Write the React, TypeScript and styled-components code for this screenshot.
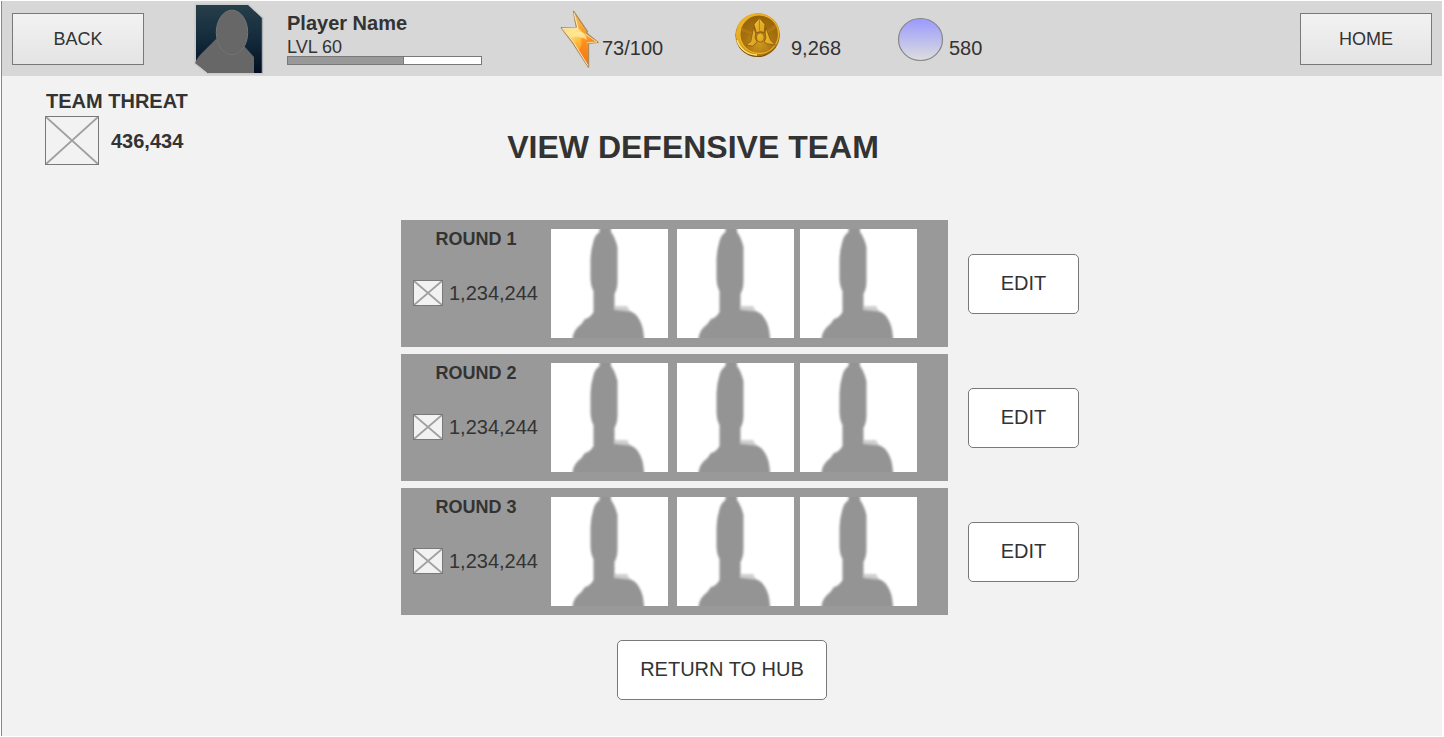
import React from 'react';
import styled, { createGlobalStyle } from 'styled-components';

const GlobalStyle = createGlobalStyle`
  * {
    box-sizing: border-box;
  }
  body {
    margin: 0;
    background: #ffffff;
    color: #333333;
    font-family: 'Liberation Sans', Arial, Helvetica, sans-serif;
  }
  h1, h2, h3, p {
    margin: 0;
  }
  svg {
    display: block;
    flex: none;
  }
`;

const Frame = styled.div`
  min-height: calc(100vh - 2px);
  margin: 1px 2px 1px 1px;
  border-left: 1px solid #888888;
  background: #f2f2f2;
`;

const TopBar = styled.header`
  display: flex;
  align-items: center;
  height: 75px;
  padding: 0 10px;
  background: #d7d7d7;
`;

const NavButton = styled.button`
  flex: none;
  width: 132px;
  height: 52px;
  padding: 0;
  border: 1px solid #797979;
  background: linear-gradient(#f2f2f2, #e4e4e4);
  color: #333333;
  font: 18px/24px 'Liberation Sans', Arial, sans-serif;
`;

const Profile = styled.div`
  display: flex;
  align-items: center;
  gap: 23px;
  margin-left: 50px;
`;

const PlayerInfo = styled.div`
  width: 195px;
  padding-bottom: 2px;
`;

const PlayerName = styled.h2`
  font-size: 20px;
  line-height: 24px;
`;

const PlayerLevel = styled.p`
  margin-top: 3px;
  font-size: 18px;
  line-height: 18px;
`;

const ProgressTrack = styled.div`
  height: 9px;
  border: 1px solid #797979;
  background: #ffffff;
`;

const ProgressFill = styled.div`
  height: 100%;
  border-right: 1px solid #797979;
  background: #999999;
`;

const Stats = styled.div`
  display: grid;
  grid-template-columns: 174px 163px auto;
  margin: 0 auto 0 78px;
`;

const Stat = styled.div`
  display: flex;
`;

const StatValue = styled.span`
  margin-top: 27px;
  font-size: 20px;
  line-height: 24px;
`;

const Heading = styled.section`
  display: grid;
  grid-template-columns: 1fr auto 1fr;
  padding: 13px 0 0 43px;
`;

const Threat = styled.div`
  font-size: 20px;
  font-weight: bold;
  line-height: 24px;
`;

const ThreatLabel = styled.h2`
  font-size: 20px;
  line-height: 24px;
  padding-left: 1px;
`;

const ThreatScore = styled.div`
  display: flex;
  align-items: center;
  gap: 12px;
  margin-top: 3px;
`;

const Title = styled.h1`
  align-self: end;
  padding-right: 101px;
  font-size: 32px;
  line-height: 36px;
`;

const Main = styled.main`
  display: flex;
  flex-direction: column;
  align-items: center;
  gap: 25px;
  padding: 55px 0 36px;
`;

const Rounds = styled.div`
  display: flex;
  flex-direction: column;
  gap: 7px;
  padding-left: 36px;
`;

const RoundRow = styled.section`
  display: flex;
  align-items: center;
  gap: 20px;
`;

const RoundPanel = styled.div`
  display: flex;
  width: 547px;
  height: 127px;
  padding: 9px 0;
  background: #999999;
`;

const RoundInfo = styled.div`
  width: 150px;
`;

const RoundName = styled.h3`
  font-size: 18px;
  line-height: 20px;
  text-align: center;
`;

const RoundScore = styled.div`
  display: flex;
  align-items: center;
  gap: 6px;
  margin-top: 31px;
  padding-left: 12px;
  font-size: 20px;
  line-height: 24px;
`;

const Members = styled.div`
  display: grid;
  grid-template-columns: 126px 123px 117px;
`;

const ActionButton = styled.button<{ $wide?: boolean }>`
  width: ${(p) => (p.$wide ? 210 : 111)}px;
  height: 60px;
  padding: 0 0 2px;
  border: 1px solid #797979;
  border-radius: 5px;
  background: #ffffff;
  color: #333333;
  font: 20px/24px 'Liberation Sans', Arial, sans-serif;
`;

function Placeholder({ width, height }: { width: number; height: number }) {
  return (
    <svg width={width} height={height} aria-hidden="true">
      <rect x="0.5" y="0.5" width={width - 1} height={height - 1} fill="#f2f2f2" stroke="#797979" />
      <path
        d={`M1 1L${width - 1} ${height - 1}M${width - 1} 1L1 ${height - 1}`}
        stroke="#a0a0a0"
        strokeWidth="1.7"
      />
      <rect x="0.5" y="0.5" width={width - 1} height={height - 1} fill="none" stroke="#797979" />
    </svg>
  );
}

function Avatar() {
  return (
    <svg width="70" height="72" viewBox="0 0 70 72" role="img" aria-label="Player avatar">
      <defs>
        <linearGradient id="avatarSky" x1="0" y1="0" x2="0" y2="1">
          <stop offset="0" stopColor="#273f4a" />
          <stop offset="0.5" stopColor="#132b3c" />
          <stop offset="1" stopColor="#020f1f" />
        </linearGradient>
      </defs>
      <path d="M2 2H54L68 15V70H14L1 60Z" fill="#cbcbcb" stroke="#cbcbcb" strokeWidth="3" />
      <path d="M2 2H54L68 15V70H14L2 60Z" fill="url(#avatarSky)" />
      <path d="M68 15V70" stroke="#6d7c86" strokeWidth="0.7" />
      <path d="M22 36L6 52Q2.5 56 1 60L14 70H60V54L51 44Z" fill="#676767" />
      <ellipse cx="38" cy="29.5" rx="15.7" ry="22.3" fill="#676767" stroke="#747474" />
    </svg>
  );
}

function BoltIcon() {
  return (
    <svg width="42" height="60" viewBox="560 9 42 60" aria-hidden="true">
      <defs>
        <linearGradient id="boltFill" gradientUnits="userSpaceOnUse" x1="566" y1="22" x2="592" y2="62">
          <stop offset="0" stopColor="#ffd65c" />
          <stop offset="0.25" stopColor="#ffe78f" />
          <stop offset="0.5" stopColor="#ffb637" />
          <stop offset="0.75" stopColor="#fb8f20" />
          <stop offset="1" stopColor="#f0741a" />
        </linearGradient>
        <linearGradient id="boltTop" x1="0" y1="0" x2="1" y2="1">
          <stop offset="0" stopColor="#ffc456" />
          <stop offset="1" stopColor="#f6921f" />
        </linearGradient>
        <linearGradient id="boltShade" x1="0" y1="0" x2="0.3" y2="1">
          <stop offset="0" stopColor="#ffae35" />
          <stop offset="0.4" stopColor="#fb8a1c" />
          <stop offset="1" stopColor="#f27a1c" />
        </linearGradient>
      </defs>
      <path
        d="M573.6 11.5L587.3 31.5L586.6 33.3L598 42.3L588.4 43.2L588.5 67L573 43L561.4 27.8L576.5 27.5Z"
        fill="url(#boltFill)"
        stroke="#b08a55"
        strokeWidth="1.5"
        strokeLinejoin="round"
      />
      <path d="M574.3 13.5L586 31.5L584.8 34.5L578 28Z" fill="url(#boltTop)" />
      <path d="M584.5 34L596 41.5L586.5 42L587.6 64L579 50Q583 44 581 40Z" fill="url(#boltShade)" />
      <path d="M576 32Q586 30 587 40Q580 35 570 37Z" fill="#fff0a8" opacity="0.7" />
      <path d="M574 12.8L577.8 28L562.4 28.4L573.6 42.4L588 65.6" fill="none" stroke="#fff3cc" strokeWidth="0.9" />
      <path d="M586 34.5L597 42L587.5 42.7" fill="none" stroke="#ffe9b5" strokeWidth="0.8" />
    </svg>
  );
}

function CoinIcon() {
  return (
    <svg width="57" height="60" viewBox="734 9 57 60" aria-hidden="true">
      <defs>
        <linearGradient id="coinRim" x1="0" y1="0" x2="1" y2="1">
          <stop offset="0" stopColor="#f2bd33" />
          <stop offset="0.45" stopColor="#e0a31c" />
          <stop offset="1" stopColor="#8a5607" />
        </linearGradient>
        <radialGradient id="coinFace" cx="0.5" cy="0.75" r="0.75">
          <stop offset="0" stopColor="#cf9a1f" />
          <stop offset="0.5" stopColor="#a87210" />
          <stop offset="1" stopColor="#966208" />
        </radialGradient>
        <linearGradient id="coinMark" x1="0" y1="0" x2="1" y2="1">
          <stop offset="0" stopColor="#f0bf33" />
          <stop offset="1" stopColor="#dba01f" />
        </linearGradient>
      </defs>
      <ellipse cx="757.5" cy="35.3" rx="22" ry="21.8" fill="#7c4c05" />
      <ellipse cx="757.8" cy="34.5" rx="22" ry="21.5" fill="url(#coinRim)" />
      <path d="M737 40A21 20.5 0 0 0 757 55" fill="none" stroke="#ffe377" strokeWidth="1.4" />
      <ellipse cx="759.2" cy="34.2" rx="19.3" ry="19.2" fill="url(#coinFace)" stroke="#eeb52c" strokeWidth="1.1" />
      <path d="M760 37L741 31V27ZM760 37L775 24L777 28ZM760 37L752 52H757ZM760 37L766 52H770Z" fill="#c48a18" opacity="0.4" />
      <g fill="url(#coinMark)" stroke="#76490a" strokeWidth="0.6" strokeLinejoin="round">
        <path d="M759.4 18L765 24.3L764.2 32.6Q760.4 30.2 756.4 32.8L754 24.3Z" />
        <path d="M753.6 27.5L755.6 33.2Q754 38 757 41.8L753 46.2L746 45L750.8 41.6Z" />
        <path d="M765.7 27.5L765.2 33Q767 38 764.2 42L767.3 43.8L775.5 45L770.5 40Z" />
        <ellipse cx="760.4" cy="37.5" rx="3.8" ry="4.5" />
      </g>
      <path d="M759.4 19V30.5" stroke="#a06b0d" strokeWidth="0.7" />
    </svg>
  );
}

function OrbIcon() {
  return (
    <svg width="52" height="60" viewBox="897 9 52 60" aria-hidden="true">
      <defs>
        <linearGradient id="orbFill" x1="0" y1="0" x2="0" y2="1">
          <stop offset="0" stopColor="#9999ff" />
          <stop offset="1" stopColor="#dedede" />
        </linearGradient>
      </defs>
      <ellipse cx="920.5" cy="39.5" rx="22" ry="21" fill="url(#orbFill)" stroke="#868689" strokeWidth="1.2" />
    </svg>
  );
}

function MemberPortrait() {
  return (
    <svg width="117" height="109" viewBox="0 0 117 109" role="img" aria-label="Team member">
      <defs>
        <filter id="softEdge" x="-20%" y="-20%" width="140%" height="140%">
          <feGaussianBlur stdDeviation="1" />
        </filter>
      </defs>
      <rect width="117" height="109" fill="#ffffff" />
      <path
        d="M48.500 -6V3Q44 6 42.500 12Q40 20 39.500 30V50Q40 58 42.500 62V83Q39 89 34 90Q31 95 27 98Q22 103 21.500 110V118H93V108Q92 96 88 90Q85 84 79 82.500L63.500 81V65Q66.500 60 66.500 52V18Q64 8 60 3V-6Z"
        fill="#949494"
        filter="url(#softEdge)"
      />
      <path d="M63 77H76L80 84H63Z" fill="#949494" opacity="0.45" filter="url(#softEdge)" />
    </svg>
  );
}

const rounds = [
  { name: 'ROUND 1', score: '1,234,244' },
  { name: 'ROUND 2', score: '1,234,244' },
  { name: 'ROUND 3', score: '1,234,244' },
];

const levelProgress = 60;

export default function App() {
  return (
    <>
      <GlobalStyle />
      <Frame>
        <TopBar>
          <NavButton type="button">BACK</NavButton>
          <Profile>
            <Avatar />
            <PlayerInfo>
              <PlayerName>Player Name</PlayerName>
              <PlayerLevel>LVL 60</PlayerLevel>
              <ProgressTrack
                role="progressbar"
                aria-label="Level progress"
                aria-valuenow={levelProgress}
                aria-valuemin={0}
                aria-valuemax={100}
              >
                <ProgressFill style={{ width: `${levelProgress}%` }} />
              </ProgressTrack>
            </PlayerInfo>
          </Profile>
          <Stats>
            <Stat>
              <BoltIcon />
              <StatValue>73/100</StatValue>
            </Stat>
            <Stat>
              <CoinIcon />
              <StatValue>9,268</StatValue>
            </Stat>
            <Stat>
              <OrbIcon />
              <StatValue>580</StatValue>
            </Stat>
          </Stats>
          <NavButton type="button">HOME</NavButton>
        </TopBar>

        <Heading>
          <Threat>
            <ThreatLabel>TEAM THREAT</ThreatLabel>
            <ThreatScore>
              <Placeholder width={54} height={49} />
              <span>436,434</span>
            </ThreatScore>
          </Threat>
          <Title>VIEW DEFENSIVE TEAM</Title>
        </Heading>

        <Main>
          <Rounds>
            {rounds.map((round) => (
              <RoundRow key={round.name}>
                <RoundPanel>
                  <RoundInfo>
                    <RoundName>{round.name}</RoundName>
                    <RoundScore>
                      <Placeholder width={30} height={26} />
                      <span>{round.score}</span>
                    </RoundScore>
                  </RoundInfo>
                  <Members>
                    <MemberPortrait />
                    <MemberPortrait />
                    <MemberPortrait />
                  </Members>
                </RoundPanel>
                <ActionButton type="button">EDIT</ActionButton>
              </RoundRow>
            ))}
          </Rounds>
          <ActionButton type="button" $wide>
            RETURN TO HUB
          </ActionButton>
        </Main>
      </Frame>
    </>
  );
}
